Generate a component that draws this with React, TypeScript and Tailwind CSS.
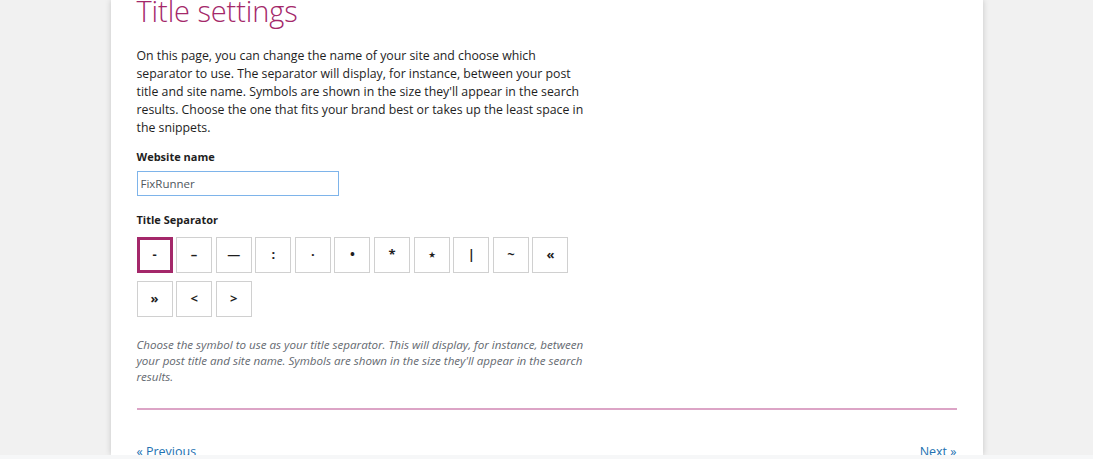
import { useState } from 'react'

const SEPARATORS = ['-', '–', '—', ':', '·', '•', '*', '⋆', '|', '~', '«', '»', '<', '>']

export default function App() {
  const [sep, setSep] = useState('-')
  const [name, setName] = useState('FixRunner')

  return (
    <div className="flex h-[459px] flex-col overflow-hidden bg-[#f1f1f1] font-['Open_Sans',sans-serif] text-[#1e1e1e]">
      <div className="flex min-h-0 flex-1 justify-center overflow-hidden">
        <div className="w-[872px] shrink-0 bg-white px-[26px] shadow-[0_0_6px_rgba(0,0,0,0.18)]">
          <div className="-mt-[9px]">
            <h1 className="text-[29px] font-light leading-[40px] tracking-[-0.1px] text-[#a4286a]">Title settings</h1>

            <p className="mt-[16px] w-[448px] text-[12.3px] leading-[18px] text-[#1e1e1e]">
              On this page, you can change the name of your site and choose which separator to use. The separator will
              display, for instance, between your post title and site name. Symbols are shown in the size they'll appear
              in the search results. Choose the one that fits your brand best or takes up the least space in the snippets.
            </p>

            <label className="mt-[12px] block text-[11px] font-bold leading-[16px]">Website name</label>
            <div className="mt-[6px] flex h-[25px] w-[202px] items-center border border-[#7eb4ea] px-[3px] text-[11.5px] text-[#50575e]">
              <input value={name} onChange={(e) => setName(e.target.value)}
                className="w-full bg-transparent outline-none" />
            </div>

            <p className="mt-[16px] text-[11px] font-bold leading-[16px]">Title Separator</p>
            <div className="mt-[9px] flex w-[440px] flex-wrap gap-x-[3.6px] gap-y-[8px]">
              {SEPARATORS.map((s) => (
                <button key={s} onClick={() => setSep(s)}
                  className={`flex h-[36px] w-[36px] items-center justify-center bg-white text-[13px] font-bold text-[#1e1e1e] ${
                    sep === s ? 'border-[3px] border-[#a4286a]' : 'border border-[#d0d0d0]'}`}>
                  {s}
                </button>
              ))}
            </div>

            <p className="mt-[20px] w-[448px] text-[11.6px] italic leading-[16px] text-[#646970]">
              Choose the symbol to use as your title separator. This will display, for instance, between your post
              title and site name. Symbols are shown in the size they'll appear in the search results.
            </p>

            <div className="mt-[23px] h-[2px] bg-[#dca4c6]" />

            <div className="mt-[33px] flex justify-between text-[12.5px] leading-[18px] text-[#2271b1]">
              <a href="#">« Previous</a>
              <a href="#">Next »</a>
            </div>
          </div>
        </div>
      </div>
      <div className="h-[4px] shrink-0 bg-[#f6f7f8]" />
    </div>
  )
}
